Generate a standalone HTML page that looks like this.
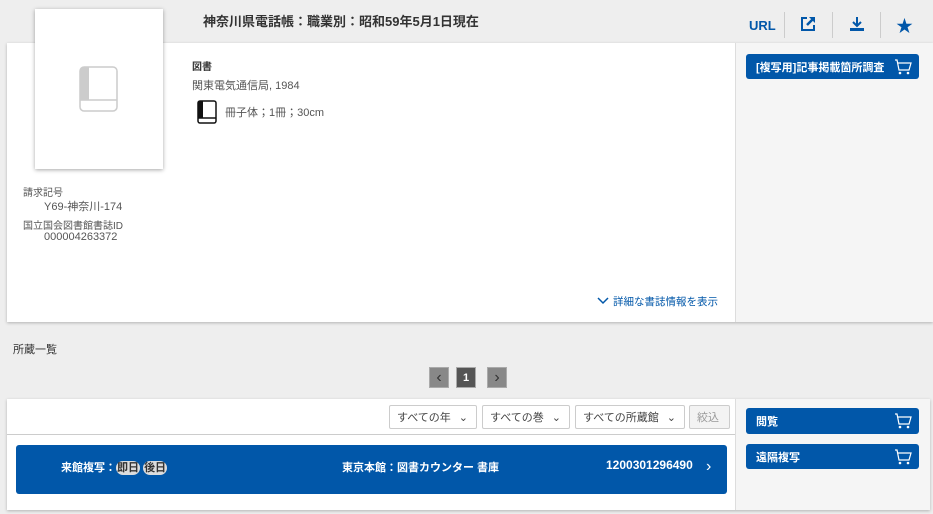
<!DOCTYPE html>
<html><head><meta charset="utf-8"><style>
*{margin:0;padding:0;box-sizing:border-box}
body{width:933px;height:514px;background:#eeeeee;font-family:"Liberation Sans","Noto Sans CJK JP",sans-serif;color:#333;position:relative;overflow:hidden}
.a{position:absolute}
.card{background:#fff;box-shadow:0 1px 3px rgba(0,0,0,.25)}
.side{background:#f5f5f5;border-left:1px solid #ddd}
.btn{background:#0157a9;color:#fff;font-size:11px;font-weight:bold;border-radius:3px;padding-left:10px;display:flex;align-items:center}
.btn svg{margin-left:auto;margin-right:7px}
.sel{background:#fff;border:1px solid #ccc;border-radius:2px;font-size:11px;color:#444;display:flex;align-items:center;padding-left:7px}
.pg{background:#888;color:#333;width:20px;height:21px;display:flex;align-items:center;justify-content:center;border:1px solid #aaa}
</style></head><body>
<div class="a" style="left:203px;top:11px;font-size:13px;font-weight:bold;color:#333">神奈川県電話帳：職業別：昭和59年5月1日現在</div>
<div class="a" style="left:749px;top:18px;font-size:13px;font-weight:bold;color:#0157a9">URL</div>
<div class="a" style="left:784px;top:12px;width:1px;height:26px;background:#ccc"></div>
<div class="a" style="left:832px;top:12px;width:1px;height:26px;background:#ccc"></div>
<div class="a" style="left:880px;top:12px;width:1px;height:26px;background:#ccc"></div>
<svg class="a" style="left:800px;top:16px" width="16" height="16" viewBox="0 0 16 16"><path d="M7 2H2v12h12V9" fill="none" stroke="#0157a9" stroke-width="2"/><path d="M9 1h6v6z" fill="#0157a9"/><path d="M14 2L7 9" stroke="#0157a9" stroke-width="2.5"/></svg>
<svg class="a" style="left:849px;top:16px" width="16" height="16" viewBox="0 0 16 16"><path d="M8 1v9M4 6l4 4 4-4" fill="none" stroke="#0157a9" stroke-width="2"/><path d="M1 12h14v3H1z" fill="#0157a9"/></svg>
<div class="a" style="left:896px;top:12px;font-size:17px;color:#0157a9">★</div>

<div class="a card" style="left:7px;top:43px;width:926px;height:279px"></div>
<div class="a side" style="left:735px;top:43px;width:198px;height:279px"></div>
<div class="a card" style="left:35px;top:9px;width:128px;height:160px;box-shadow:0 1px 4px rgba(0,0,0,.35)"></div>
<svg class="a" style="left:79px;top:66px" width="40" height="46" viewBox="0 0 40 46"><rect x="1" y="1" width="37" height="44" rx="4" fill="none" stroke="#ccc" stroke-width="1.5"/><path d="M1 5a4 4 0 0 1 4-4h5v33H1z" fill="#ccc"/><path d="M1 34h37" stroke="#ccc" stroke-width="1.5"/></svg>
<div class="a" style="left:192px;top:58px;font-size:10px;font-weight:bold">図書</div>
<div class="a" style="left:192px;top:77px;font-size:11px;color:#555">関東電気通信局, 1984</div>
<svg class="a" style="left:197px;top:100px" width="20" height="24" viewBox="0 0 20 24"><rect x="1" y="1" width="18" height="22" rx="2" fill="none" stroke="#111" stroke-width="1.5"/><rect x="1" y="1" width="5" height="17" fill="#111"/><path d="M1 18h18" stroke="#111" stroke-width="1.5"/></svg>
<div class="a" style="left:225px;top:104px;font-size:11px;color:#555">冊子体；1冊；30cm</div>
<div class="a" style="left:23px;top:184px;font-size:10px;color:#555">請求記号</div>
<div class="a" style="left:44px;top:198px;font-size:11px;color:#555">Y69-神奈川-174</div>
<div class="a" style="left:23px;top:217px;font-size:10px;color:#555">国立国会図書館書誌ID</div>
<div class="a" style="left:44px;top:231px;font-size:11px;color:#555">000004263372</div>
<svg class="a" style="left:597px;top:297px" width="12" height="8" viewBox="0 0 12 8"><path d="M1 1l5 5 5-5" fill="none" stroke="#0157a9" stroke-width="1.5"/></svg>
<div class="a" style="left:613px;top:294px;font-size:10.5px;color:#0157a9">詳細な書誌情報を表示</div>
<div class="a btn" style="left:746px;top:54px;width:173px;height:25px">[複写用]記事掲載箇所調査<svg width="18" height="18" viewBox="0 0 18 18"><path d="M1 2h2l2 10h10l2-7H4" fill="none" stroke="#fff" stroke-width="1.2"/><circle cx="6" cy="15" r="1.3" fill="#fff"/><circle cx="14" cy="15" r="1.3" fill="#fff"/></svg></div>

<div class="a" style="left:13px;top:341px;font-size:11px;color:#333">所蔵一覧</div>
<div class="a pg" style="left:429px;top:367px">‹</div>
<div class="a pg" style="left:456px;top:367px;background:#555;color:#fff;font-size:11px;font-weight:bold">1</div>
<div class="a pg" style="left:487px;top:367px">›</div>

<div class="a card" style="left:7px;top:399px;width:923px;height:111px"></div>
<div class="a side" style="left:735px;top:399px;width:195px;height:111px"></div>
<div class="a" style="left:7px;top:434px;width:728px;height:1px;background:#ccc"></div>
<div class="a sel" style="left:389px;top:405px;width:88px;height:24px">すべての年 <span style="margin-left:8px">⌄</span></div>
<div class="a sel" style="left:482px;top:405px;width:88px;height:24px">すべての巻 <span style="margin-left:8px">⌄</span></div>
<div class="a sel" style="left:575px;top:405px;width:110px;height:24px">すべての所蔵館 <span style="margin-left:8px">⌄</span></div>
<div class="a sel" style="left:689px;top:405px;width:41px;height:24px;background:#f3f3f3;color:#999">絞込</div>
<div class="a" style="left:16px;top:445px;width:711px;height:49px;background:#0157a9;border-radius:3px;color:#fff;font-size:11px;font-weight:bold">
<div class="a" style="left:45px;top:14px">来館複写：<span style="background:#ddd;color:#333;border-radius:9px;padding:1px 1px">即日</span> <span style="background:#ddd;color:#333;border-radius:9px;padding:1px 1px">後日</span></div>
<div class="a" style="left:326px;top:14px">東京本館：図書カウンター 書庫</div>
<div class="a" style="left:590px;top:13px;font-size:12px">1200301296490</div>
<div class="a" style="left:690px;top:13px;font-size:16px;font-weight:normal">›</div>
</div>
<div class="a btn" style="left:746px;top:408px;width:173px;height:26px">閲覧<svg width="18" height="18" viewBox="0 0 18 18"><path d="M1 2h2l2 10h10l2-7H4" fill="none" stroke="#fff" stroke-width="1.2"/><circle cx="6" cy="15" r="1.3" fill="#fff"/><circle cx="14" cy="15" r="1.3" fill="#fff"/></svg></div>
<div class="a btn" style="left:746px;top:444px;width:173px;height:25px">遠隔複写<svg width="18" height="18" viewBox="0 0 18 18"><path d="M1 2h2l2 10h10l2-7H4" fill="none" stroke="#fff" stroke-width="1.2"/><circle cx="6" cy="15" r="1.3" fill="#fff"/><circle cx="14" cy="15" r="1.3" fill="#fff"/></svg></div>
</body></html>
